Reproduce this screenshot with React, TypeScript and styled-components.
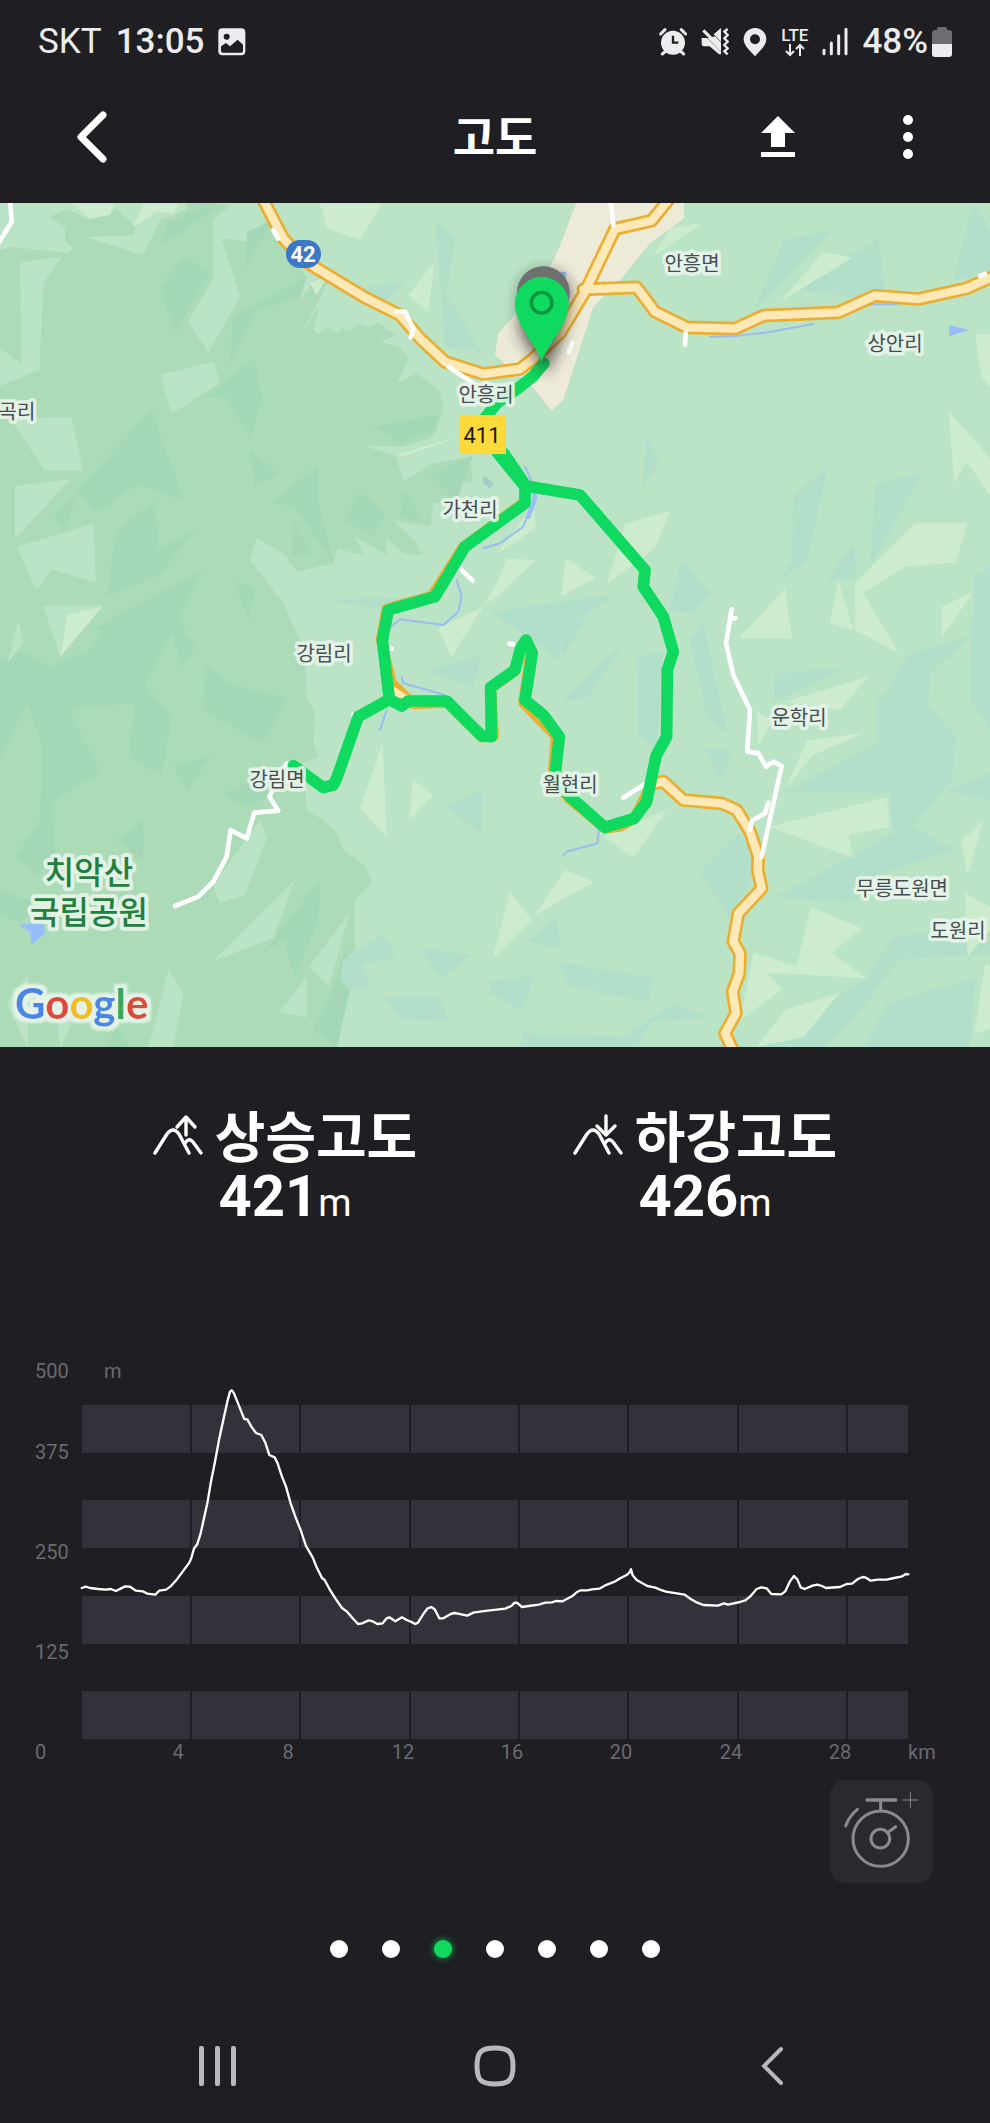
import React from "react";
import styled, { createGlobalStyle } from "styled-components";

const GlobalStyle = createGlobalStyle`
  * { box-sizing: border-box; }
  body { margin: 0; background: #1f1e23; }
  button { border: 0; padding: 0; background: none; color: inherit; font: inherit; cursor: pointer; }
  svg { display: block; flex: none; }
`;

const Screen = styled.div`
  display: flex;
  flex-direction: column;
  min-height: 100vh;
  background: #1f1e23;
  color: #fff;
  font-family: Roboto, "Noto Sans CJK KR", sans-serif;
`;

/* ---------- status bar ---------- */

const StatusBar = styled.div`
  display: flex;
  align-items: center;
  justify-content: space-between;
  height: 83px;
  padding: 0 38px;
  color: #ececee;
  font-size: 35px;
  line-height: 40px;
`;

const StatusGroup = styled.div`
  display: flex;
  align-items: center;
  gap: 14px;
`;

const Clock = styled.span`
  font-weight: 500;
`;

const Battery = styled.span`
  display: flex;
  align-items: center;
  gap: 4px;
  font-weight: 500;
`;

const NetworkType = styled.span`
  display: flex;
  flex-direction: column;
  align-items: center;
  font-size: 17px;
  font-weight: 500;
  line-height: 16px;
`;

/* ---------- app bar ---------- */

const AppBar = styled.header`
  display: grid;
  grid-template-columns: 1fr auto 1fr;
  align-items: center;
  height: 107px;
  margin-bottom: 13px;
  padding: 0 50px;
`;

const Title = styled.h1`
  margin: 0;
  padding-bottom: 6px;
  font-size: 46px;
  line-height: 60px;
  font-weight: 700;
  font-family: "Noto Sans CJK KR", sans-serif;
`;

const Actions = styled.div`
  display: flex;
  justify-content: flex-end;
  gap: 66px;
`;

const IconButton = styled.button<{ $wide?: boolean }>`
  display: flex;
  align-items: center;
  justify-content: center;
  width: ${(p) => (p.$wide ? 84 : 64)}px;
  height: 64px;
`;

/* ---------- map ---------- */

const MapSvg = styled.svg`
  width: 100%;
  height: auto;
`;

const PlaceLabel = styled.text<{ $park?: boolean }>`
  font-family: "Noto Sans CJK KR", sans-serif;
  font-size: ${(p) => (p.$park ? 32 : 20)}px;
  font-weight: ${(p) => (p.$park ? 500 : 400)};
  fill: ${(p) => (p.$park ? "#1f8040" : "#474c50")};
  stroke: #e9f6ec;
  stroke-opacity: 0.9;
  stroke-width: ${(p) => (p.$park ? 8 : 7)}px;
  stroke-linejoin: round;
  paint-order: stroke;
  text-anchor: middle;
`;

const RoadNumber = styled.text<{ $light?: boolean }>`
  font-family: Roboto, sans-serif;
  font-size: 22px;
  font-weight: ${(p) => (p.$light ? 700 : 400)};
  fill: ${(p) => (p.$light ? "#fff" : "#1d1b12")};
  text-anchor: middle;
`;

const Wordmark = styled.text`
  font-family: Lato, sans-serif;
  font-size: 42px;
  font-weight: 700;
`;

/* ---------- totals ---------- */

const Totals = styled.section`
  display: grid;
  grid-template-columns: 1fr 1fr;
  padding: 56px 75px 0;
`;

const Total = styled.div`
  display: flex;
  flex-direction: column;
  align-items: center;
`;

const TotalName = styled.h2`
  display: flex;
  align-items: center;
  gap: 12px;
  margin: 0;
  font-family: "Noto Sans CJK KR", sans-serif;
  font-size: 55px;
  line-height: 60px;
  font-weight: 700;
`;

const TotalValue = styled.p`
  margin: 0;
  padding-top: 5px;
  font-size: 58px;
  line-height: 56px;
  font-weight: 700;
`;

const Unit = styled.span`
  font-size: 38px;
  font-weight: 400;
`;

/* ---------- chart ---------- */

const ChartSvg = styled.svg`
  width: 100%;
  height: auto;
  margin-top: 109px;
`;

const AxisLabel = styled.text`
  font-family: Roboto, sans-serif;
  font-size: 20px;
  fill: #6a6a6f;
`;

/* ---------- footer ---------- */

const LapRow = styled.div`
  display: flex;
  justify-content: flex-end;
  padding: 10px 57px 0;
`;

const LapButton = styled.button`
  width: 103px;
  height: 103px;
  border-radius: 15px;
  background: #2a292f;
`;

const Pager = styled.nav`
  display: flex;
  justify-content: center;
  align-items: center;
  gap: 34px;
  height: 20px;
  margin-top: 56px;
`;

const PageDot = styled.button<{ $active?: boolean }>`
  width: 18px;
  height: 18px;
  border-radius: 50%;
  background: ${(p) => (p.$active ? "#10d960" : "#fff")};
  box-shadow: ${(p) => (p.$active ? "0 0 6px 1px #0a8f41" : "none")};
`;

const SystemNav = styled.nav`
  display: grid;
  grid-template-columns: repeat(3, 1fr);
  justify-items: center;
  align-items: center;
  height: 114px;
  margin-top: auto;
  padding: 0 80px;
  color: #b9b9bb;
`;

/* Map artwork is drawn at three units per map pixel. */

const shades = {
  dark: "#a3d7b5",
  mid: "#abdcb7",
  light: "#bbe4c7",
  pale: "#cdebcd",
  teal: "#b1dfc9",
};
type Shade = keyof typeof shades;
type Patch = [Shade, string];

const forest =
  "0,0 560,0 740,20 740,130 800,60 850,130 920,230 900,300 960,225 990,235 890,430 960,310 940,390 955,402 985,385 1010,402 1025,385 1055,392 1075,373 1105,382 1135,370 1190,405 1140,425 1195,440 1228,475 1190,550 1250,520 1320,572 1330,620 1310,690 1290,715 1200,742 1085,735 1190,770 1210,845 1300,790 1410,770 1420,850 1365,840 1370,900 1300,910 1290,980 1180,960 1250,1030 1265,1065 1210,1060 1158,1010 1160,1065 1065,1010 1090,1065 1015,1048 1000,1090 890,1115 850,1060 770,1015 750,1080 850,1210 885,1290 915,1340 920,1490 945,1540 940,1630 955,1670 910,1690 920,1830 970,1860 1010,1900 1030,1950 1100,2000 1115,2050 1065,2100 1065,2250 1030,2280 1050,2370 1030,2440 1010,2560 0,2560";

const northWest: Patch[] = [
  ["light", "0,0 560,0 560,30 480,60 430,165 255,112 400,105 405,80 350,25 270,60 200,28 150,50 195,85 195,120 220,145 205,160 40,140 0,150"],
  ["pale", "215,10 345,10 330,45 270,55"],
  ["pale", "400,80 430,10 540,10 520,40 470,35"],
  ["light", "640,60 700,10 742,10 742,125 665,115 720,290 625,458 565,365 640,235"],
  ["light", "60,185 185,170 130,250 118,510 0,558 0,445 65,492"],
  ["light", "482,525 640,485 660,548 515,642"],
  ["light", "30,655 215,652 248,812 135,812"],
  ["light", "45,858 210,838 45,1018"],
  ["light", "50,1040 280,972 288,1148 155,1108 110,1172"],
  ["light", "130,1217 310,1217 180,1370"],
  ["pale", "200,1245 305,1220 185,1365"],
  ["dark", "480,265 550,170 630,215 525,400"],
  ["dark", "480,140 500,70 640,10 640,30"],
  ["dark", "742,95 820,60 735,205"],
  ["dark", "700,350 920,230 900,290 770,330 690,495"],
  ["dark", "620,590 765,475 785,600 750,715 680,592"],
  ["dark", "160,950 455,630 550,900 415,850 290,940 235,880 195,990"],
  ["dark", "350,990 465,905 475,1050 590,985 480,1125 320,1190"],
  ["dark", "750,750 835,820 765,860"],
  ["dark", "810,912 955,795 950,890 1000,1090 880,915"],
  ["dark", "1035,960 1080,875 1155,945 1115,1010"],
  ["dark", "880,960 935,1060 875,1070"],
  ["dark", "1120,680 1320,645 1300,690 1205,728"],
  ["dark", "1215,870 1270,970 1200,945"],
  ["dark", "1290,825 1420,765 1370,900"],
  ["dark", "270,1290 610,1110 540,1250 560,1290"],
  ["dark", "705,1145 765,1165 745,1260"],
  ["pale", "960,10 1145,10 1080,120 980,85"],
  ["pale", "1225,285 1303,185 1285,335"],
  ["pale", "930,250 985,225 950,285"],
  ["pale", "1195,762 1370,712 1200,780"],
  ["light", "1190,775 1310,735 1210,845"],
  ["teal", "1305,60 1368,110 1340,280 1445,455 1335,440"],
  ["teal", "1060,270 1220,240 1160,300"],
  ["teal", "980,1200 1290,1190 1150,1230"],
];

const northEast: Patch[] = [
  ["pale", "540,85 635,70 490,170"],
  ["pale", "1000,155 1085,175 875,300"],
  ["teal", "880,120 1030,90 790,335"],
  ["teal", "920,270 1165,115 1185,270 1160,300"],
  ["pale", "1000,155 1085,175 875,302"],
  ["teal", "1390,240 1450,10 1500,90 1500,220"],
  ["teal", "470,710 510,790 455,865"],
  ["teal", "910,885 1015,800 950,1085 860,1145 905,1080"],
  ["teal", "1155,850 1295,822 1140,1105"],
  ["teal", "1010,1145 1090,1030 1100,1130"],
  ["teal", "575,1075 660,1180 610,1240 540,1230"],
  ["teal", "0,1235 215,1205 375,1185 215,1290 210,1380"],
  ["teal", "1450,1130 1500,1100 1500,1290 1450,1500"],
  ["pale", "1375,632 1500,775 1500,885 1430,785 1393,850"],
  ["pale", "1455,402 1500,402 1500,560 1475,535"],
  ["pale", "405,972 540,932 495,1045 350,1155"],
  ["pale", "225,1075 318,1135 215,1188"],
  ["pale", "50,1075 137,1080 0,1210"],
  ["pale", "130,915 137,985 20,1062"],
  ["pale", "1275,970 1432,970 1397,1088 1245,1100 1120,1180 1225,1358 1095,1290 1095,1150"],
  ["pale", "885,1165 905,1315 748,1315"],
  ["pale", "1045,1140 1090,1290 1020,1270"],
  ["pale", "1355,1220 1450,1175 1355,1315"],
  ["pale", "-155,1285 -20,1220 -115,1368"],
  ["pale", "10,1190 25,1140 -20,1220"],
];

const southWest: Patch[] = [
  ["dark", "0,420 0,120 75,95 150,140 270,90 320,0 500,0 590,75 545,140 515,40 435,195 515,290 485,465 385,410 405,250 205,268 300,455 155,550 165,700 110,765 45,710 120,600 130,380 80,250 10,400"],
  ["dark", "615,135 700,195 865,235 785,370 610,270"],
  ["dark", "520,435 630,410 560,515"],
  ["dark", "665,525 760,480 830,520 740,560"],
  ["dark", "350,660 430,600 430,720"],
  ["dark", "0,810 110,850 60,910 0,880"],
  ["dark", "785,1005 960,780 955,900 885,1070 850,960"],
  ["dark", "0,870 0,840 90,870"],
  ["dark", "1040,980 1050,1110 1010,1285 940,1230 1000,1110"],
  ["dark", "320,1285 350,1220 390,1285"],
  ["light", "55,0 70,70 22,130"],
  ["pale", "205,0 275,0 180,105"],
  ["light", "780,600 800,655 735,825 660,850 640,795"],
  ["light", "885,780 820,955 640,1022"],
  ["light", "1048,878 988,1100 927,1040"],
  ["light", "920,1070 920,1193 838,1175"],
  ["light", "505,1050 550,1115 520,1285 445,1285"],
  ["light", "85,1065 85,1285 20,1150"],
  ["light", "170,1180 240,1160 180,1285"],
  ["pale", "1148,370 1160,650 1080,565"],
  ["pale", "1238,478 1300,525 1228,600"],
  ["pale", "1315,30 1415,10 1355,110"],
  ["teal", "1280,150 1445,105 1420,205"],
  ["teal", "1340,560 1450,508 1445,645"],
  ["teal", "1030,1020 1150,945 1195,1010 1085,1035 1110,1105 1050,1110 1020,1080"],
  ["teal", "1260,985 1415,1005 1320,1075"],
  ["teal", "1150,1130 1320,1130 1350,1205 1200,1195"],
];

const southEast: Patch[] = [
  ["teal", "600,60 640,0 665,130 715,340 650,290"],
  ["teal", "440,110 520,95 500,385 445,345"],
  ["teal", "215,245 405,60 300,230"],
  ["teal", "215,0 290,0 215,110"],
  ["teal", "855,160 1070,145 850,245"],
  ["teal", "645,380 730,395 690,480"],
  ["teal", "630,755 745,640 790,670 800,760 735,860 720,900"],
  ["teal", "1180,225 1260,100 1440,50 1320,160 1315,260 1400,350 1385,480 1270,620 1390,690 1180,760 1085,850 860,830 1210,640 1200,520 890,515 1160,370 1160,230"],
  ["teal", "1445,0 1500,0 1500,330 1440,240"],
  ["teal", "1500,460 1375,510 1500,540"],
  ["teal", "1210,950 1500,920 1500,1000 1225,1020 1090,1200 1000,1285 800,1285 1130,1075"],
  ["teal", "1190,1150 1455,1075 1440,1285 1120,1285"],
  ["teal", "205,1025 490,1075 475,1145 240,1100"],
  ["teal", "0,1085 135,1065 95,1170 0,1120"],
  ["teal", "100,1240 400,1250 555,1150 650,1190 480,1210 440,1285 90,1285"],
  ["teal", "110,965 200,890 210,985"],
  ["pale", "800,0 880,-60 908,55 748,55"],
  ["pale", "530,570 430,713 340,650"],
  ["pale", "225,750 313,785 135,885"],
  ["pale", "60,815 125,900 8,1015"],
  ["pale", "1135,170 1050,270 885,245"],
  ["pale", "800,275 850,300 805,375"],
  ["pale", "950,362 1125,338 970,405 890,500"],
  ["pale", "1192,532 1198,620 1075,645 1088,713 840,620"],
  ["pale", "1480,600 1433,765 1413,665"],
  ["pale", "962,862 1115,925 1025,1000 1130,1075 830,1058 878,1108 750,1200 790,1000 920,1038"],
  ["pale", "1048,1120 940,1252 800,1280 885,1170"],
  ["pale", "1485,1035 1500,1035 1500,1225 1453,1243"],
  ["pale", "1425,820 1500,860 1500,930 1433,1010"],
];

const quadrants: { x: number; y: number; patches: Patch[] }[] = [
  { x: 0, y: 0, patches: northWest },
  { x: 1470, y: 0, patches: northEast },
  { x: 0, y: 1260, patches: southWest },
  { x: 1470, y: 1260, patches: southEast },
];

const mainRoads = [
  "790,0 850,115 910,180 950,205 1090,290 1200,345 1260,415 1335,485 1450,522 1560,507 1595,480 1680,400 1755,275 1845,87 1955,62 2005,0",
  "1750,268 1910,262 1965,335 2060,382 2205,386 2290,347 2515,337 2625,287 2755,297 2900,265 2990,225",
  "1960,1750 1990,1745 2050,1800 2165,1810 2210,1830 2250,1895 2275,1970 2273,2010 2285,2065 2215,2140 2200,2225 2220,2260 2218,2320 2198,2375 2208,2440 2175,2500 2205,2565",
];

const lanes = [
  "30,0 35,65 -5,130",
  "820,90 834,116",
  "1190,335 1215,335 1240,385 1232,412",
  "1345,500 1420,550",
  "1380,1105 1418,1142",
  "1832,0 1840,76",
  "2057,398 2055,434",
  "1706,456 1716,428",
  "2940,228 2955,222",
  "1060,1545 1075,1560",
  "1165,1346 1175,1346",
  "1528,1331 1540,1333",
  "525,2118 595,2090 640,2045 680,1970 692,1890 740,1915 763,1838 835,1832 808,1790 860,1690",
  "2195,1228 2178,1330 2200,1425 2250,1530 2242,1655 2275,1660 2298,1700 2320,1685 2345,1698 2285,1970",
  "2198,1255 2207,1255",
  "2305,1808 2295,1840 2256,1862 2250,1890",
  "1870,1793 1945,1745",
];

const streams = [
  "1575,800 1602,860 1600,900 1570,980 1500,1030 1450,1045",
  "1370,1140 1385,1190 1375,1235 1330,1275 1200,1258 1165,1285",
  "1205,1430 1210,1450 1335,1485 1400,1560",
  "1160,1530 1140,1590",
  "1740,1830 1797,1890 1792,1930 1700,1955 1690,1965",
  "2130,410 2200,409 2310,396 2440,372",
  "2605,313 2690,313",
];

const track =
  "1632,490 1598,530 1550,568 1490,610 1450,660 1440,690 1515,765 1578,858 1740,885 1935,1110 1930,1160 1990,1250 2020,1355 2002,1410 2000,1610 1968,1668 1940,1805 1903,1855 1815,1882 1710,1790 1665,1730 1678,1610 1630,1545 1575,1500 1597,1360 1578,1320 1562,1345 1545,1410 1472,1462 1474,1610 1445,1608 1340,1503 1225,1503 1205,1518 1168,1498 1075,1550 1010,1735 1000,1755 970,1763 880,1697";
const westBranch = "1168,1498 1147,1320 1165,1230 1305,1190 1395,1040 1575,910 1575,860 1492,758";
const coveredRoad =
  "1575,862 1572,907 1390,1040 1295,1188 1160,1226 1143,1320 1175,1450 1240,1512 1340,1508 1445,1612 1482,1608 1473,1465 1545,1414";
const coveredRoadEast = "1590,1370 1570,1508 1668,1610 1658,1730 1705,1795 1815,1885 1860,1880 1903,1855 1940,1780";

const places: { name: string; x: number; y: number; park?: boolean }[] = [
  { name: "안흥면", x: 692, y: 271 },
  { name: "상안리", x: 895, y: 351 },
  { name: "안흥리", x: 486, y: 402 },
  { name: "곡리", x: 17, y: 419 },
  { name: "가천리", x: 470, y: 517 },
  { name: "강림리", x: 324, y: 661 },
  { name: "강림면", x: 277, y: 787 },
  { name: "월현리", x: 570, y: 792 },
  { name: "운학리", x: 799, y: 725 },
  { name: "무릉도원면", x: 902, y: 896 },
  { name: "도원리", x: 958, y: 938 },
  { name: "치악산", x: 89, y: 884, park: true },
  { name: "국립공원", x: 89, y: 924, park: true },
];

const RouteMap = () => (
  <MapSvg viewBox="0 203 990 844" role="img" aria-label="주행 경로 지도">
    <defs>
      <filter id="halo" x="-10%" y="-20%" width="120%" height="140%">
        <feMorphology in="SourceAlpha" operator="dilate" radius="4" result="grown" />
        <feGaussianBlur in="grown" stdDeviation="1" result="soft" />
        <feFlood floodColor="#e3f3e7" />
        <feComposite in2="soft" operator="in" result="edge" />
        <feMerge>
          <feMergeNode in="edge" />
          <feMergeNode in="SourceGraphic" />
        </feMerge>
      </filter>
      <filter id="shade" x="-60%" y="-40%" width="220%" height="200%">
        <feGaussianBlur stdDeviation="22" />
      </filter>
    </defs>
    <g transform="translate(0 200) scale(0.33333)">
      <rect width="2975" height="2560" fill={shades.light} />
      <polygon points={forest} fill={shades.mid} />
      {quadrants.map((q) => (
        <g key={`${q.x}-${q.y}`} transform={`translate(${q.x} ${q.y})`}>
          {q.patches.map(([shade, points]) => (
            <polygon key={points} points={points} fill={shades[shade]} />
          ))}
        </g>
      ))}
      <polygon
        points="1732,0 2052,0 2052,55 1950,130 1865,235 1780,320 1690,600 1655,632 1600,565 1485,465 1495,400 1620,260 1675,150"
        fill="#eeead8"
      />
      <polygon points="2848,375 2908,390 2848,408" fill="#98bdfb" />
      <polygon points="1680,215 1700,215 1695,245" fill="#98bdfb" />
      <polygon points="55,2175 130,2165 135,2200 95,2235 90,2195" fill="#98bdfb" />
      <polygon points="1450,825 1482,850 1470,865 1448,850" fill="#a3cdc6" />
      <g fill="none" strokeLinejoin="round" strokeLinecap="round">
        {streams.map((p) => (
          <polyline key={p} points={p} stroke="#9cbdf0" strokeWidth="6" />
        ))}
        <polyline points="1600,850 1605,895 1585,950" stroke="#9cbdf8" strokeWidth="13" />
        {mainRoads.map((p) => (
          <polyline key={p} points={p} stroke="#ecae30" strokeWidth="41" />
        ))}
        {mainRoads.map((p) => (
          <polyline key={p} points={p} stroke="#fde8b8" strokeWidth="25" />
        ))}
        {[coveredRoad, coveredRoadEast].map((p) => (
          <polyline key={p} points={p} stroke="#ecae30" strokeWidth="31" />
        ))}
        <polygon points="1183,1465 1225,1493 1190,1488" fill="#fde8b8" stroke="#fde8b8" strokeWidth="8" />
        {lanes.map((p) => (
          <polyline key={p} points={p} stroke="#fff" strokeWidth="14" />
        ))}
        <polyline points={westBranch} stroke="#10d960" strokeWidth="35" />
        <polyline points={track} stroke="#10d960" strokeWidth="35" />
      </g>
      <path d="M1560 280a75 75 0 0 1 150 20L1680 430L1640 520L1560 400Z" fill="#222" opacity=".7" filter="url(#shade)" />
      <circle cx="1630" cy="278" r="79" fill="#6d706e" />
      <path d="M1625 485C1605 425 1545 375 1545 311A80 80 0 0 1 1706 311C1706 375 1647 425 1625 485Z" fill="#10d960" />
      <circle cx="1625" cy="308" r="31" fill="none" stroke="#08953d" strokeWidth="10" />
    </g>
    {places.map((p) => (
      <PlaceLabel key={p.name} x={p.x} y={p.y} $park={p.park}>
        {p.name}
      </PlaceLabel>
    ))}
    <rect x="286" y="240" width="35" height="28" rx="14" fill="#3c78c8" />
    <RoadNumber x="303" y="262" $light>
      42
    </RoadNumber>
    <rect x="460" y="415" width="46" height="39" fill="#fdda3a" />
    <RoadNumber x="482" y="443">411</RoadNumber>
    <Wordmark x="15" y="1019" filter="url(#halo)">
      <tspan fill="#4a86e8">G</tspan>
      <tspan fill="#dc4a3d">o</tspan>
      <tspan fill="#f0bd24">o</tspan>
      <tspan fill="#4a86e8">g</tspan>
      <tspan fill="#3ba55b">l</tspan>
      <tspan fill="#dc4a3d">e</tspan>
    </Wordmark>
  </MapSvg>
);

const bandTops = [1405, 1500, 1596, 1691];
const gridLines = [191, 300, 410, 519, 628, 738, 847];
const yAxis = [
  { label: "500", y: 1378 },
  { label: "375", y: 1459 },
  { label: "250", y: 1559 },
  { label: "125", y: 1659 },
  { label: "0", y: 1759 },
];
const xAxis = [
  { label: "4", x: 178 },
  { label: "8", x: 288 },
  { label: "12", x: 403 },
  { label: "16", x: 512 },
  { label: "20", x: 621 },
  { label: "24", x: 731 },
  { label: "28", x: 840 },
];
const altitude =
  "245,744 257,740 270,744 295,747 318,749 332,747 348,753 362,746 376,739 390,740 408,752 428,754 442,761 466,764 478,752 498,749 512,739 530,719 548,695 568,668 574,654 582,626 592,612 602,580 612,535 622,490 632,430 645,365 658,295 670,240 682,185 690,155 695,151 701,158 712,185 726,220 733,237 742,238 754,260 768,279 784,285 796,308 808,345 824,352 832,368 846,410 858,440 872,490 886,530 902,570 918,618 938,652 950,682 966,714 974,720 990,750 1008,778 1026,804 1040,814 1060,837 1074,852 1086,850 1106,841 1118,844 1132,852 1148,850 1160,835 1168,832 1186,844 1196,838 1206,832 1220,840 1232,845 1246,852 1254,848 1270,822 1282,806 1294,801 1304,808 1318,835 1330,835 1352,822 1364,819 1384,823 1402,827 1420,818 1440,815 1470,811 1516,806 1534,798 1544,788 1552,789 1566,801 1586,798 1616,794 1636,788 1656,787 1668,783 1688,784 1716,769 1730,757 1742,751 1762,751 1776,748 1798,746 1814,737 1846,724 1862,714 1880,705 1888,698 1893,688 1898,706 1910,720 1926,729 1942,738 1966,743 1980,749 1998,755 2016,758 2054,764 2072,777 2092,788 2110,795 2154,797 2172,790 2184,794 2220,786 2236,781 2252,768 2270,747 2284,742 2300,745 2314,762 2344,763 2356,754 2370,724 2382,708 2392,718 2402,742 2414,747 2438,737 2452,734 2466,738 2478,744 2520,741 2540,732 2556,731 2574,717 2588,711 2598,713 2612,722 2634,719 2660,719 2682,714 2704,710 2718,702 2725,703";

const AltitudeChart = () => (
  <ChartSvg viewBox="0 1340 990 430" role="img" aria-label="고도 그래프">
    {bandTops.map((y) => (
      <rect key={y} x="82" y={y} width="826" height="48" fill="#32323a" />
    ))}
    {gridLines.map((x) => (
      <rect key={x} x={x - 1} y="1400" width="2" height="339" fill="#1f1e23" />
    ))}
    {yAxis.map((t) => (
      <AxisLabel key={t.label} x="35" y={t.y}>
        {t.label}
      </AxisLabel>
    ))}
    <AxisLabel x="104" y="1378">
      m
    </AxisLabel>
    {xAxis.map((t) => (
      <AxisLabel key={t.label} x={t.x} y="1759" textAnchor="middle">
        {t.label}
      </AxisLabel>
    ))}
    <AxisLabel x="908" y="1759">
      km
    </AxisLabel>
    <polyline
      points={altitude}
      transform="translate(0 1340) scale(0.33333)"
      fill="none"
      stroke="#fff"
      strokeWidth="7"
      strokeLinejoin="round"
      strokeLinecap="round"
    />
  </ChartSvg>
);

const SlopeIcon = ({ down = false }: { down?: boolean }) => (
  <svg width="50" height="46" viewBox="0 -4 50 46" fill="none" stroke="#fff" strokeWidth="3.4" strokeLinecap="round" strokeLinejoin="round">
    <path d="M2 39L14 20Q20 12 26 20L36 39M32 29Q36 23 40 28L48 39" />
    {down ? <path d="M33 2V20M24 12L33 21L42 12" /> : <path d="M33 21V4M24 13L33 3L42 13" />}
  </svg>
);

export default function App() {
  return (
    <Screen>
      <GlobalStyle />
      <StatusBar>
        <StatusGroup>
          <span>SKT</span>
          <Clock>13:05</Clock>
          <svg width="28" height="28" viewBox="653 86 84 84" aria-label="사진">
            <rect x="654" y="87" width="81" height="81" rx="12" fill="currentColor" />
            <circle cx="679" cy="112" r="9" fill="#1f1e23" />
            <path d="M662 141L677 131L689 141L712 121L728 136V155Q728 160 722 160H668Q662 160 662 155Z" fill="#1f1e23" />
          </svg>
        </StatusGroup>
        <StatusGroup>
          <svg width="28" height="30" viewBox="505 84 84 90" aria-label="알람">
            <circle cx="547" cy="131" r="36" fill="currentColor" />
            <path d="M510 105L523 92M572 92L585 105M523 158L515 165M571 158L579 165" stroke="currentColor" strokeWidth="9" strokeLinecap="round" />
            <path d="M547 110V131H563" stroke="#1f1e23" strokeWidth="7" fill="none" />
          </svg>
          <svg width="28" height="30" viewBox="630 84 84 90" aria-label="무음">
            <path d="M632 117H648L690 158V166H684L656 142H638Q632 142 632 136ZM668 106L690 87V128Z" fill="currentColor" />
            <path d="M637 94L688 145" stroke="currentColor" strokeWidth="9" />
            <path d="M650 118L690 158V130L672 112Z" fill="currentColor" />
            <path d="M710 90L700 98L710 108L700 118L710 128L700 138L710 148L700 157L710 166" stroke="currentColor" strokeWidth="7" fill="none" />
          </svg>
          <svg width="24" height="30" viewBox="756 82 72 90" aria-label="위치">
            <path fillRule="evenodd" d="M792 85C811 85 826 100 826 119C826 138 806 154 792 170C778 154 758 138 758 119C758 100 773 85 792 85ZM792 104a15 15 0 1 0 0 30a15 15 0 0 0 0-30Z" fill="currentColor" />
          </svg>
          <NetworkType>
            LTE
            <svg width="20" height="14" viewBox="0 0 20 14" fill="none" stroke="currentColor" strokeWidth="2">
              <path d="M5 1V12M1 8L5 12L9 8M15 13V2M11 6L15 2L19 6" />
            </svg>
          </NetworkType>
          <svg width="26" height="30" viewBox="993 84 78 90" aria-label="신호 세기">
            <path d="M999 154V164M1021 132V164M1043 110V164M1065 91V164" stroke="currentColor" strokeWidth="9" strokeLinecap="round" />
          </svg>
          <Battery>
            48%
            <svg width="20" height="30" viewBox="0 0 20 30" aria-label="배터리">
              <path d="M5 2Q5 0 7 0H13Q15 0 15 2V3H17Q20 3 20 6V18H0V6Q0 3 3 3H5Z" fill="#6d6c71" />
              <path d="M0 17H20V27Q20 30 17 30H3Q0 30 0 27Z" fill="currentColor" />
            </svg>
          </Battery>
        </StatusGroup>
      </StatusBar>

      <AppBar>
        <IconButton $wide aria-label="뒤로">
          <svg width="32" height="52" viewBox="0 0 32 52" fill="none" stroke="#fff" strokeWidth="7" strokeLinecap="round" strokeLinejoin="round">
            <path d="M27 4L5 26L27 48" />
          </svg>
        </IconButton>
        <Title>고도</Title>
        <Actions>
          <IconButton aria-label="공유">
            <svg width="34" height="42" viewBox="0 0 34 42" fill="#fff">
              <path d="M17 0L34 17H24V31H10V17H0ZM0 36H34V41H0Z" />
            </svg>
          </IconButton>
          <IconButton aria-label="메뉴">
            <svg width="10" height="44" viewBox="0 0 10 44" fill="#fff">
              <circle cx="5" cy="5" r="5" />
              <circle cx="5" cy="22" r="5" />
              <circle cx="5" cy="39" r="5" />
            </svg>
          </IconButton>
        </Actions>
      </AppBar>

      <RouteMap />

      <Totals>
        <Total>
          <TotalName>
            <SlopeIcon />
            상승고도
          </TotalName>
          <TotalValue>
            421<Unit>m</Unit>
          </TotalValue>
        </Total>
        <Total>
          <TotalName>
            <SlopeIcon down />
            하강고도
          </TotalName>
          <TotalValue>
            426<Unit>m</Unit>
          </TotalValue>
        </Total>
      </Totals>

      <AltitudeChart />

      <LapRow>
        <LapButton aria-label="랩 추가">
          <svg width="103" height="103" viewBox="150 62 309 309" fill="none" stroke="#8b8a8f" strokeLinecap="round">
            <g strokeWidth="9">
              <circle cx="302" cy="238" r="83" />
              <circle cx="301" cy="238" r="28" />
              <path d="M302 127V152M325 218L347 202M197 200Q207 171 232 150" />
            </g>
            <path d="M261 122H347" strokeWidth="11" />
            <path d="M367 122H415M391 97V147" strokeWidth="3" strokeLinecap="butt" />
          </svg>
        </LapButton>
      </LapRow>

      <Pager aria-label="페이지">
        {[1, 2, 3, 4, 5, 6, 7].map((n) => (
          <PageDot key={n} $active={n === 3} aria-label={`${n}페이지`} />
        ))}
      </Pager>

      <SystemNav aria-label="시스템">
        <IconButton aria-label="최근 앱">
          <svg width="38" height="40" viewBox="0 0 38 40" fill="currentColor">
            <rect width="5" height="40" rx="2" />
            <rect x="16" width="5" height="40" rx="2" />
            <rect x="32" width="5" height="40" rx="2" />
          </svg>
        </IconButton>
        <IconButton aria-label="홈">
          <svg width="42" height="42" viewBox="0 0 42 42" fill="none" stroke="currentColor" strokeWidth="5">
            <path d="M21 3C35 3 39 7 39 21S35 39 21 39S3 35 3 21S7 3 21 3Z" />
          </svg>
        </IconButton>
        <IconButton aria-label="이전">
          <svg width="24" height="40" viewBox="0 0 24 40" fill="none" stroke="currentColor" strokeWidth="4" strokeLinecap="round" strokeLinejoin="miter">
            <path d="M21 3L4 20L21 37" />
          </svg>
        </IconButton>
      </SystemNav>
    </Screen>
  );
}
